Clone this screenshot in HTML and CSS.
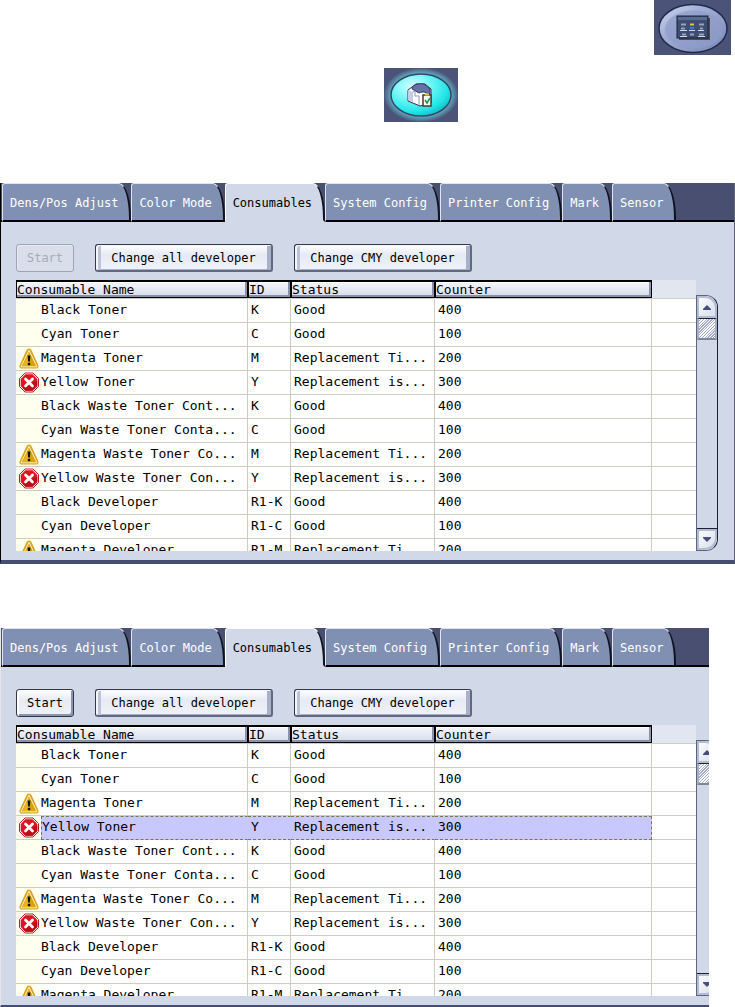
FILE: index.html
```html
<!DOCTYPE html>
<html lang="en">
<head>
    <meta charset="UTF-8">
    <meta name="viewport" content="width=device-width, initial-scale=1.0">
    <title>Consumables</title>
    <link rel="stylesheet" href="styles.css">
</head>
<body>
    <!-- icons used by the tables -->
    <svg class="symbols" aria-hidden="true">
        <symbol id="warning" viewBox="0 0 20 21">
            <path d="M10 .5c1.500 0 2.200 1 2.800 2.200l6.400 14c.9 2-.1 3.800-2.200 3.800H3c-2.100 0-3.100-1.800-2.200-3.800l6.400-14C7.800 1.500 8.500.5 10 .5z" fill="#d9a520"/>
            <path d="M10 2.200L2 18.800h16z" fill="#d9a010" stroke="#fff3bd" stroke-width="1" stroke-linejoin="round"/>
            <path d="M10 4v14.300H3.500z" fill="#e6b51c"/>
            <path d="M8.600 7.500h2.800l-.5 6H9.100z" fill="#111"/>
            <rect x="8.800" y="14.800" width="2.400" height="2.400" fill="#111"/>
        </symbol>
        <symbol id="error" viewBox="0 0 20 20">
            <path d="M6 .5h8L19.500 6v8L14 19.500H6L.5 14V6z" fill="#fff" stroke="#b3202a"/>
            <path d="M6.400 1.700h7.200l4.700 4.700v7.200l-4.700 4.700H6.400l-4.700-4.700V6.400z" fill="#e0141f"/>
            <path d="M18.300 8v5.600l-4.700 4.700H6.400l-3-3z" fill="#c00c18"/>
            <path d="M6.500 6.500l7 7M13.500 6.500l-7 7" stroke="#fff" stroke-width="2.800" stroke-linecap="round"/>
        </symbol>
        <symbol id="arrow-up" viewBox="0 0 8 5">
            <path d="M4 0l4 4v1H0V4z" fill="#454f78"/>
        </symbol>
        <symbol id="arrow-down" viewBox="0 0 8 5">
            <path d="M0 0h8v1L4 5 0 1z" fill="#454f78"/>
        </symbol>
    </svg>

    <div class="shortcuts">
        <button class="round-button settings" type="button" aria-label="Settings">
            <svg width="77" height="55" viewBox="0 0 77 55">
                <defs>
                    <linearGradient id="grey-blue" x1="0" y1="0" x2="1" y2="1">
                        <stop offset="0" stop-color="#d3d9ef"/>
                        <stop offset=".35" stop-color="#a3afd6"/>
                        <stop offset="1" stop-color="#7886b4"/>
                    </linearGradient>
                </defs>
                <rect width="77" height="55" fill="#4b5379"/>
                <ellipse cx="39" cy="28.500" rx="34" ry="24" fill="url(#grey-blue)" stroke="#1f2b4b" stroke-width="1.500"/>
                <ellipse cx="40" cy="29.500" rx="29" ry="19" fill="#8f9dca" opacity=".7"/>
                <rect x="25" y="18" width="31" height="22" fill="#4d4c52"/>
                <rect x="23" y="16" width="31" height="22" fill="#3d4d74" stroke="#1b2437"/>
                <path d="M24 18.500h29" stroke="#5b6b92" stroke-width="3"/>
                <path d="M27 24.500h5M45 24.500h5M27 28.500h4M46 28.500h3M28 34.500h4M36 34.500h4M45 34.500h5" stroke="#9aa4b4" stroke-width="2"/>
                <path d="M26 30.500h7M35 30.500h6M44 30.500h6M26 36.500h7M44 36.500h7" stroke="#d4dae4"/>
                <path d="M36 24.500h4" stroke="#e8c23a" stroke-width="2"/>
                <path d="M36 28h4" stroke="#4477d0" stroke-width="2"/>
            </svg>
        </button>
        <button class="round-button printer" type="button" aria-label="Printer check">
            <svg width="74" height="54" viewBox="0 0 74 54">
                <defs>
                    <radialGradient id="aqua" cx=".35" cy=".3" r=".75">
                        <stop offset="0" stop-color="#d5ffff"/>
                        <stop offset=".4" stop-color="#75f8f6"/>
                        <stop offset=".8" stop-color="#20e4e6"/>
                        <stop offset="1" stop-color="#12bcc6"/>
                    </radialGradient>
                    <radialGradient id="glow">
                        <stop offset=".8" stop-color="#63aabb"/>
                        <stop offset="1" stop-color="#4b5b80"/>
                    </radialGradient>
                </defs>
                <rect width="74" height="54" fill="#4b5379"/>
                <ellipse cx="37" cy="27" rx="37" ry="27" fill="url(#glow)"/>
                <ellipse cx="37" cy="27" rx="30" ry="21" fill="url(#aqua)" stroke="#334669" stroke-width="1.500"/>
                <path d="M24 22l8-6h9l6 5v14l-11 3-12-5z" fill="#fff" stroke="#2e3252"/>
                <path d="M28 21c1-4 5-6 12-5l6 5v7c-3-4-7-5-11-3z" fill="#6672a3" stroke="#343b68"/>
                <path d="M24 22l5 2v10l-5-2z" fill="#c6cce5"/>
                <path d="M29 24l2-1v5h4v9" fill="none" stroke="#8d98bd"/>
                <rect x="39" y="27" width="8" height="11" fill="#fff" stroke="#553521" stroke-width="1.500"/>
                <path d="M41 26.500h4" stroke="#e5bd58" stroke-width="2"/>
                <path d="M41 32l2 3 3-5" fill="none" stroke="#159448" stroke-width="1.500"/>
            </svg>
        </button>
    </div>

    <section class="panel">
        <nav class="tabs">
            <button type="button">Dens/Pos Adjust</button>
            <button type="button">Color Mode</button>
            <button type="button" class="active">Consumables</button>
            <button type="button">System Config</button>
            <button type="button">Printer Config</button>
            <button type="button">Mark</button>
            <button type="button">Sensor</button>
        </nav>
        <div class="content">
            <div class="actions">
                <button type="button" class="start" disabled>Start</button>
                <button type="button" class="wide">Change all developer</button>
                <button type="button" class="wide">Change CMY developer</button>
            </div>
            <div class="list">
                <div class="table-box">
                    <table>
                        <colgroup>
                            <col class="col-icon"><col class="col-name"><col class="col-id"><col class="col-status"><col class="col-counter"><col>
                        </colgroup>
                        <thead>
                            <tr><th colspan="2">Consumable Name</th><th>ID</th><th>Status</th><th>Counter</th><td></td></tr>
                        </thead>
                        <tbody>
                            <tr><td></td><td>Black Toner</td><td>K</td><td>Good</td><td>400</td><td></td></tr>
                            <tr><td></td><td>Cyan Toner</td><td>C</td><td>Good</td><td>100</td><td></td></tr>
                            <tr><td><svg><use href="#warning"/></svg></td><td>Magenta Toner</td><td>M</td><td>Replacement Ti...</td><td>200</td><td></td></tr>
                            <tr><td><svg><use href="#error"/></svg></td><td>Yellow Toner</td><td>Y</td><td>Replacement is...</td><td>300</td><td></td></tr>
                            <tr><td></td><td>Black Waste Toner Cont...</td><td>K</td><td>Good</td><td>400</td><td></td></tr>
                            <tr><td></td><td>Cyan Waste Toner Conta...</td><td>C</td><td>Good</td><td>100</td><td></td></tr>
                            <tr><td><svg><use href="#warning"/></svg></td><td>Magenta Waste Toner Co...</td><td>M</td><td>Replacement Ti...</td><td>200</td><td></td></tr>
                            <tr><td><svg><use href="#error"/></svg></td><td>Yellow Waste Toner Con...</td><td>Y</td><td>Replacement is...</td><td>300</td><td></td></tr>
                            <tr><td></td><td>Black Developer</td><td>R1-K</td><td>Good</td><td>400</td><td></td></tr>
                            <tr><td></td><td>Cyan Developer</td><td>R1-C</td><td>Good</td><td>100</td><td></td></tr>
                            <tr><td><svg><use href="#warning"/></svg></td><td>Magenta Developer</td><td>R1-M</td><td>Replacement Ti...</td><td>200</td><td></td></tr>
                        </tbody>
                    </table>
                </div>
                <div class="scrollbar">
                    <button type="button" class="up" aria-label="Scroll up"><svg><use href="#arrow-up"/></svg></button>
                    <div class="thumb"></div>
                    <button type="button" class="down" aria-label="Scroll down"><svg><use href="#arrow-down"/></svg></button>
                </div>
            </div>
        </div>
    </section>

    <div class="cropped">
        <section class="panel second">
            <nav class="tabs">
                <button type="button">Dens/Pos Adjust</button>
                <button type="button">Color Mode</button>
                <button type="button" class="active">Consumables</button>
                <button type="button">System Config</button>
                <button type="button">Printer Config</button>
                <button type="button">Mark</button>
                <button type="button">Sensor</button>
            </nav>
            <div class="content">
                <div class="actions">
                    <button type="button" class="start">Start</button>
                    <button type="button" class="wide">Change all developer</button>
                    <button type="button" class="wide">Change CMY developer</button>
                </div>
                <div class="list">
                    <div class="table-box">
                        <table>
                            <colgroup>
                                <col class="col-icon"><col class="col-name"><col class="col-id"><col class="col-status"><col class="col-counter"><col>
                            </colgroup>
                            <thead>
                                <tr><th colspan="2">Consumable Name</th><th>ID</th><th>Status</th><th>Counter</th><td></td></tr>
                            </thead>
                            <tbody>
                                <tr><td></td><td>Black Toner</td><td>K</td><td>Good</td><td>400</td><td></td></tr>
                                <tr><td></td><td>Cyan Toner</td><td>C</td><td>Good</td><td>100</td><td></td></tr>
                                <tr><td><svg><use href="#warning"/></svg></td><td>Magenta Toner</td><td>M</td><td>Replacement Ti...</td><td>200</td><td></td></tr>
                                <tr class="selected"><td><svg><use href="#error"/></svg></td><td>Yellow Toner</td><td>Y</td><td>Replacement is...</td><td>300</td><td></td></tr>
                                <tr><td></td><td>Black Waste Toner Cont...</td><td>K</td><td>Good</td><td>400</td><td></td></tr>
                                <tr><td></td><td>Cyan Waste Toner Conta...</td><td>C</td><td>Good</td><td>100</td><td></td></tr>
                                <tr><td><svg><use href="#warning"/></svg></td><td>Magenta Waste Toner Co...</td><td>M</td><td>Replacement Ti...</td><td>200</td><td></td></tr>
                                <tr><td><svg><use href="#error"/></svg></td><td>Yellow Waste Toner Con...</td><td>Y</td><td>Replacement is...</td><td>300</td><td></td></tr>
                                <tr><td></td><td>Black Developer</td><td>R1-K</td><td>Good</td><td>400</td><td></td></tr>
                                <tr><td></td><td>Cyan Developer</td><td>R1-C</td><td>Good</td><td>100</td><td></td></tr>
                                <tr><td><svg><use href="#warning"/></svg></td><td>Magenta Developer</td><td>R1-M</td><td>Replacement Ti...</td><td>200</td><td></td></tr>
                            </tbody>
                        </table>
                    </div>
                    <div class="scrollbar">
                        <button type="button" class="up" aria-label="Scroll up"><svg><use href="#arrow-up"/></svg></button>
                        <div class="thumb"></div>
                        <button type="button" class="down" aria-label="Scroll down"><svg><use href="#arrow-down"/></svg></button>
                    </div>
                </div>
            </div>
        </section>
    </div>
</body>
</html>
```
FILE: styles.css
```css
*{
    box-sizing: border-box;
}
body{
    margin: 0;
    background: white;
    color: black;
    font-family: "DejaVu Sans Mono", "Liberation Mono", monospace;
    font-size: 13px;
}
button{
    margin: 0;
    padding: 0;
    font-family: inherit;
    font-size: 12px;
    color: inherit;
}
svg{
    display: block;
}
.symbols{
    display: none;
}

/* round buttons on top */
.shortcuts{
    display: flex;
    flex-direction: column;
    gap: 13px;
    margin-bottom: 61px;
}
.round-button{
    border: 0;
    background: none;
}
.settings{
    align-self: flex-end;
    margin-right: 4px;
}
.printer{
    align-self: flex-start;
    margin-left: 384px;
}

/* panel */
.panel{
    border-left: 1px solid black;
    border-right: 1px solid #5d6274;
    border-bottom: 4px solid #454d70;
    background: #d1d8e8;
}
.cropped{
    margin-top: 64px;
    margin-right: 26px;
    overflow: hidden;
}
.second{
    margin-right: -26px;
    border-left-color: #e4e6ec;
    border-bottom-width: 2px;
}
.tabs{
    display: flex;
    height: 39px;
    padding-left: 1px;
    background: #484f70;
    box-shadow: inset 0 -2px black;
}
.tabs button{
    height: 39px;
    padding: 2px 11px 0 7px;
    border: 1px solid #dfe4f0;
    border-right: 2px solid #10131f;
    border-bottom: 2px solid black;
    border-radius: 3px 12px 0 0 / 3px 35px 0 0;
    background: #8090b2;
    color: white;
    white-space: nowrap;
}
.tabs .active{
    border-color: white #10131f #d1d8e8 white;
    background: #d1d8e8;
    color: black;
}
.content{
    padding: 22px 16px 9px 15px;
}
.actions{
    display: flex;
    margin-bottom: 8px;
}
.actions button{
    height: 28px;
    border: 1px solid #34384a;
    border-radius: 3px;
    background: linear-gradient(#ffffff, #e6eaf4 40%, #f0f2f9);
    box-shadow: inset 2px 1px #fff, inset -2px -2px #8c93ac;
    white-space: nowrap;
}
.actions .start{
    width: 58px;
    margin-right: 21px;
}
.actions .wide{
    width: 178px;
    margin-right: 21px;
    border-bottom: 2px solid #62687f;
    border-right: 2px solid #62687f;
    box-shadow: inset 2px 1px #f4f6fb, inset 5px 0 #bcc4da, inset -4px -1px #a9b1c9;
}
.actions .start:disabled{
    border-color: #9da4b5;
    background: #d9deea;
    box-shadow: inset 1px 1px #e8ebf3;
    color: #a7abba;
}

/* table */
.list{
    display: flex;
}
.table-box{
    flex: 1;
    min-width: 0;
    height: 271px;
    overflow: hidden;
    background: white;
}
table{
    width: 100%;
    table-layout: fixed;
    border-collapse: separate;
    border-spacing: 0;
}
.col-icon{
    width: 25px;
}
.col-name{
    width: 207px;
}
.col-id{
    width: 43px;
}
.col-status{
    width: 144px;
}
.col-counter{
    width: 217px;
}
th{
    height: 18px;
    padding: 0;
    border: 1px solid black;
    border-top-width: 2px;
    background: linear-gradient(#f4f6fb, #d6dcea);
    box-shadow: inset -2px -2px #8991ab, inset 0 1px #fff;
    font-weight: normal;
    line-height: 15px;
    text-align: left;
}
thead td{
    background: #e1e6f0;
}
tbody td{
    height: 24px;
    padding: 0 0 2px 3px;
    border-right: 1px solid #cfccc2;
    border-bottom: 1px solid #cfccc2;
    line-height: 20px;
    white-space: nowrap;
}
tbody tr:first-child td{
    height: 25px;
    border-top: 1px solid #cfccc2;
}
tbody td:first-child{
    padding-bottom: 0;
    border-right: 0;
    background: #fffff0;
}
tbody td:nth-child(2){
    padding-left: 0;
}
tbody td:last-child{
    border-right: 0;
}
tbody svg{
    width: 20px;
    height: 21px;
}
.selected td:nth-child(n+2):nth-child(-n+5){
    border-top: 1px dashed #77775a;
    border-right-color: #c8c8ff;
    border-bottom: 1px dashed #77775a;
    background: #c8c8ff;
}
.selected td:nth-child(2){
    border-left: 1px dashed #77775a;
}
.selected td:nth-child(5){
    border-right: 1px dashed #77775a !important;
}

/* scrollbar */
.scrollbar{
    display: flex;
    flex-direction: column;
    width: 22px;
    margin-top: 15px;
    border: 1px solid #5d657c;
    border-right: 1px solid #1c2233;
    border-radius: 0 12px 12px 0;
    background: #d1d8e8;
    overflow: hidden;
}
.scrollbar button{
    display: grid;
    place-items: center;
    height: 22px;
    border: 0;
    background: linear-gradient(135deg, #ffffff, #d5dbea);
    box-shadow: inset 0 0 0 2px #b4bcd2;
}
.scrollbar svg{
    width: 8px;
    height: 5px;
}
.scrollbar .up{
    border-radius: 0 12px 0 0;
}
.scrollbar .down{
    margin-top: auto;
    border-top: 1px solid #1c2233;
    border-radius: 0 0 12px 0;
}
.thumb{
    height: 22px;
    border: 2px solid #a9b0c6;
    border-top: 1px solid #1c2233;
    border-bottom: 2px solid #7e869f;
    background: repeating-linear-gradient(135deg, #ffffff 0 1px, #a4abc8 1px 2px);
}
```
